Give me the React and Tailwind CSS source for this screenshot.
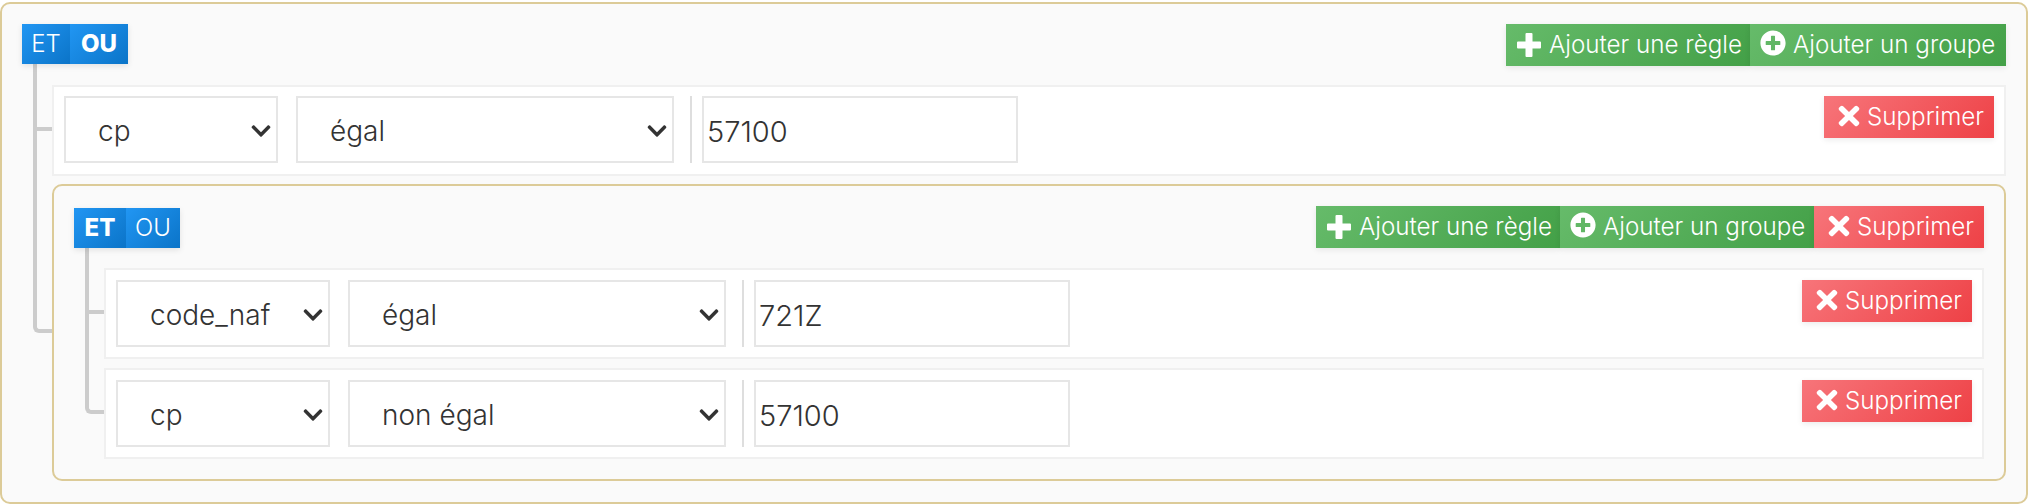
import { FaChevronDown, FaPlusCircle, FaTimes } from 'react-icons/fa'

function PlusIcon({ className }) {
  return (
    <svg viewBox="0 0 24 24" fill="currentColor" className={className}>
      <path d="M9.5 0h5a1 1 0 0 1 1 1v7.5H23a1 1 0 0 1 1 1v5a1 1 0 0 1-1 1h-7.5V23a1 1 0 0 1-1 1h-5a1 1 0 0 1-1-1v-7.5H1a1 1 0 0 1-1-1v-5a1 1 0 0 1 1-1h7.5V1a1 1 0 0 1 1-1z" />
    </svg>
  )
}

function ActionButton({ icon: Icon, label, color, width, iconClass }) {
  const colors = color === 'red'
    ? 'bg-[linear-gradient(135deg,#f7757a,#ee4146)]'
    : 'bg-[linear-gradient(135deg,#66bb6a,#43a047)]'
  return (
    <button className={`flex h-[42px] ${width} items-center ${colors} pl-[10px] text-[24.2px] leading-none font-[350] text-white shadow-[0_2px_6px_rgba(0,0,0,0.08)]`}>
      <span className="flex w-[33px] shrink-0">
        <Icon className={iconClass} />
      </span>
      <span className="whitespace-nowrap pt-[1px]">{label}</span>
    </button>
  )
}

function Condition({ active, label, width }) {
  return (
    <button className={`flex h-full ${width} items-center justify-center bg-[linear-gradient(135deg,#2196f3,#0b74c8)] text-[24px] leading-none text-white ${active ? 'font-extrabold' : 'font-light'}`}>
      {label}
    </button>
  )
}

function FieldSelect({ value, options, width }) {
  return (
    <div className={`relative h-[67px] ${width} shrink-0`}>
      <select
        defaultValue={value}
        className="h-full w-full appearance-none border-2 border-[#e6e6e6] bg-white pl-[32px] pt-[3px] text-[28px] font-[350] text-[#333] outline-none"
      >
        {options.map(opt => <option key={opt}>{opt}</option>)}
      </select>
      <FaChevronDown className="pointer-events-none absolute right-[6px] top-[24px] size-[22px] text-[#333]" />
    </div>
  )
}

const fields = ['cp', 'code_naf']
const operators = ['égal', 'non égal']

function DeleteButton() {
  return <ActionButton icon={FaTimes} iconClass="mb-[3px] size-[30px]" label="Supprimer" color="red" width="w-[170px]" />
}

function AddRuleButton() {
  return <ActionButton icon={PlusIcon} iconClass="mb-[1px] ml-[1px] size-[24px]" label="Ajouter une règle" color="green" width="w-[244px]" />
}

function AddGroupButton({ width }) {
  return <ActionButton icon={FaPlusCircle} iconClass="mb-[4px] size-[26px]" label="Ajouter un groupe" color="green" width={width} />
}

function Rule({ field, operator, value, isLast, className }) {
  return (
    <div className={`relative flex border-2 border-[#f0f0f0] bg-white px-[10px] ${className}`}>
      <Branch isLast={isLast} />
      <FieldSelect value={field} options={fields} width="w-[214px]" />
      <div className="ml-[18px]">
        <FieldSelect value={operator} options={operators} width="w-[378px]" />
      </div>
      <div className="ml-[16px] mr-[10px] h-[67px] w-[2px] bg-[#dedede]" />
      <input
        defaultValue={value}
        className="h-[67px] w-[316px] border-2 border-[#e6e6e6] bg-white px-[3px] pt-[3px] text-[29px] font-[350] text-[#333] outline-none"
      />
      <div className="ml-auto">
        <DeleteButton />
      </div>
    </div>
  )
}

function Branch({ isLast }) {
  return (
    <span className={`absolute left-[-21px] top-[-56px] h-[calc(50%+56px)] w-[19px] border-b-4 border-l-4 border-[#ccc] ${isLast ? 'rounded-bl-[6px]' : ''}`} />
  )
}

function GroupHeader({ andActive, children, nested }) {
  return (
    <div className={`flex justify-between ${nested ? 'items-end' : 'items-start'}`}>
      <div className="relative z-10 flex h-[40px] shadow-[0_2px_6px_rgba(0,0,0,0.1)]">
        <Condition active={andActive} label="ET" width={nested ? 'w-[52px]' : 'w-[48px]'} />
        <Condition active={!andActive} label="OU" width={nested ? 'w-[54px]' : 'w-[58px]'} />
      </div>
      <div className="flex">{children}</div>
    </div>
  )
}

export default function App() {
  return (
    <div className='pt-[2px] font-["Inter",sans-serif]'>
      <div className="rounded-[10px] border-2 border-[#dccb98] bg-[#fafafa] px-[20px] pb-[21px] pt-[20px]">
        <GroupHeader andActive={false}>
          <AddRuleButton />
          <AddGroupButton width="w-[256px]" />
        </GroupHeader>

        <div className="ml-[30px] mt-[19px]">
          <Rule field="cp" operator="égal" value="57100" className="mb-[8px] pb-[11px] pt-[9px]" />

          <div className="relative rounded-[10px] border-2 border-[#dccb98] bg-[#fafafa] px-[20px] pb-[20px] pt-[20px]">
            <Branch isLast />
            <GroupHeader andActive nested>
              <AddRuleButton />
              <AddGroupButton width="w-[254px]" />
              <DeleteButton />
            </GroupHeader>
            <div className="ml-[30px] mt-[20px]">
              <Rule field="code_naf" operator="égal" value="721Z" className="mb-[9px] py-[10px]" />
              <Rule field="cp" operator="non égal" value="57100" isLast className="py-[10px]" />
            </div>
          </div>
        </div>
      </div>
    </div>
  )
}
